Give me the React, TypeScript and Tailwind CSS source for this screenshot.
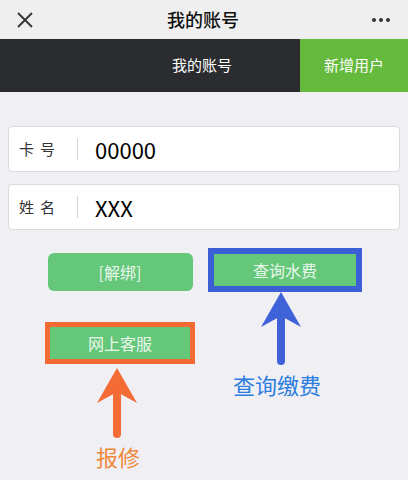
import React from "react";

const font = { fontFamily: '"Noto Sans CJK SC", "Noto Sans", sans-serif' };

const Arrow: React.FC<{ color: string; height: number }> = ({ color, height }) => (
  <svg width="42" height={height} viewBox={`0 0 42 ${height}`}>
    <polygon points={`21,0 41,35 21,24 1,35`} fill={color} />
    <line x1="21" y1="20" x2="21" y2={height - 4} stroke={color} strokeWidth="8" strokeLinecap="round" />
  </svg>
);

const Field: React.FC<{ label: [string, string]; value: string }> = ({ label, value }) => (
  <div className="flex items-center h-[46px] bg-white border border-[#dcdcdc] rounded-[4px]">
    <span className="w-[68px] pl-[10px] flex gap-[6px] text-[15px] text-[#333]">
      <span>{label[0]}</span>
      <span>{label[1]}</span>
    </span>
    <span className="w-px h-[22px] bg-[#d4d4d4]" />
    <span className="pl-[17px] text-[22px] text-black">{value}</span>
  </div>
);

export default function App() {
  return (
    <div className="w-[408px] h-[480px] bg-[#f0eff4] overflow-hidden" style={font}>
      <div className="h-[39px] bg-[#efefef] flex items-center justify-between px-[16px]">
        <svg width="18" height="18" viewBox="0 0 18 18">
          <path d="M2 2 L16 16 M16 2 L2 16" stroke="#333" strokeWidth="1.8" />
        </svg>
        <span className="text-[18px] font-medium text-[#111]">我的账号</span>
        <div className="flex gap-[3px] pr-[2px]">
          <span className="w-[4px] h-[4px] rounded-full bg-[#333]" />
          <span className="w-[4px] h-[4px] rounded-full bg-[#333]" />
          <span className="w-[4px] h-[4px] rounded-full bg-[#333]" />
        </div>
      </div>

      <div className="flex h-[53px]">
        <div className="w-[300px] bg-[#2b2c2f] flex items-center justify-end pr-[68px]">
          <span className="text-[15px] text-white">我的账号</span>
        </div>
        <div className="flex-1 bg-[#65ba3d] flex items-center justify-center">
          <span className="text-[15px] text-white">新增用户</span>
        </div>
      </div>

      <div className="px-[8px] pt-[34px] flex flex-col gap-[12px]">
        <Field label={["卡", "号"]} value="00000" />
        <Field label={["姓", "名"]} value="XXX" />
      </div>

      <div className="flex pl-[45px] gap-[13px] pt-[18px]">
        <div className="w-[150px] flex flex-col items-center">
          <div className="mt-[5px] w-[145px] h-[38px] rounded-[6px] bg-[#64c77a] flex items-center justify-center text-[16px] text-[#eaf7ec]">
            [解绑]
          </div>
          <div className="mt-[31px] w-[150px] h-[42px] border-[5px] border-[#f36a34] bg-[#64c77a] flex items-center justify-center text-[16px] text-[#eaf7ec]">
            网上客服
          </div>
          <div className="mt-[4px] mr-[6px]">
            <Arrow color="#f46b35" height={70} />
          </div>
          <span className="mt-[3px] mr-[4px] text-[22px] leading-[30px] text-[#f0883a]">报修</span>
        </div>
        <div className="w-[154px] flex flex-col items-center">
          <div className="w-[154px] h-[44px] border-[6px] border-[#3c5fd6] bg-[#64c77a] flex items-center justify-center text-[16px] text-[#eaf7ec]">
            查询水费
          </div>
          <div className="mr-[8px]">
            <Arrow color="#3f62d8" height={73} />
          </div>
          <span className="mt-[4px] mr-[16px] text-[22px] leading-[30px] text-[#2b7de0]">查询缴费</span>
        </div>
      </div>
    </div>
  );
}
